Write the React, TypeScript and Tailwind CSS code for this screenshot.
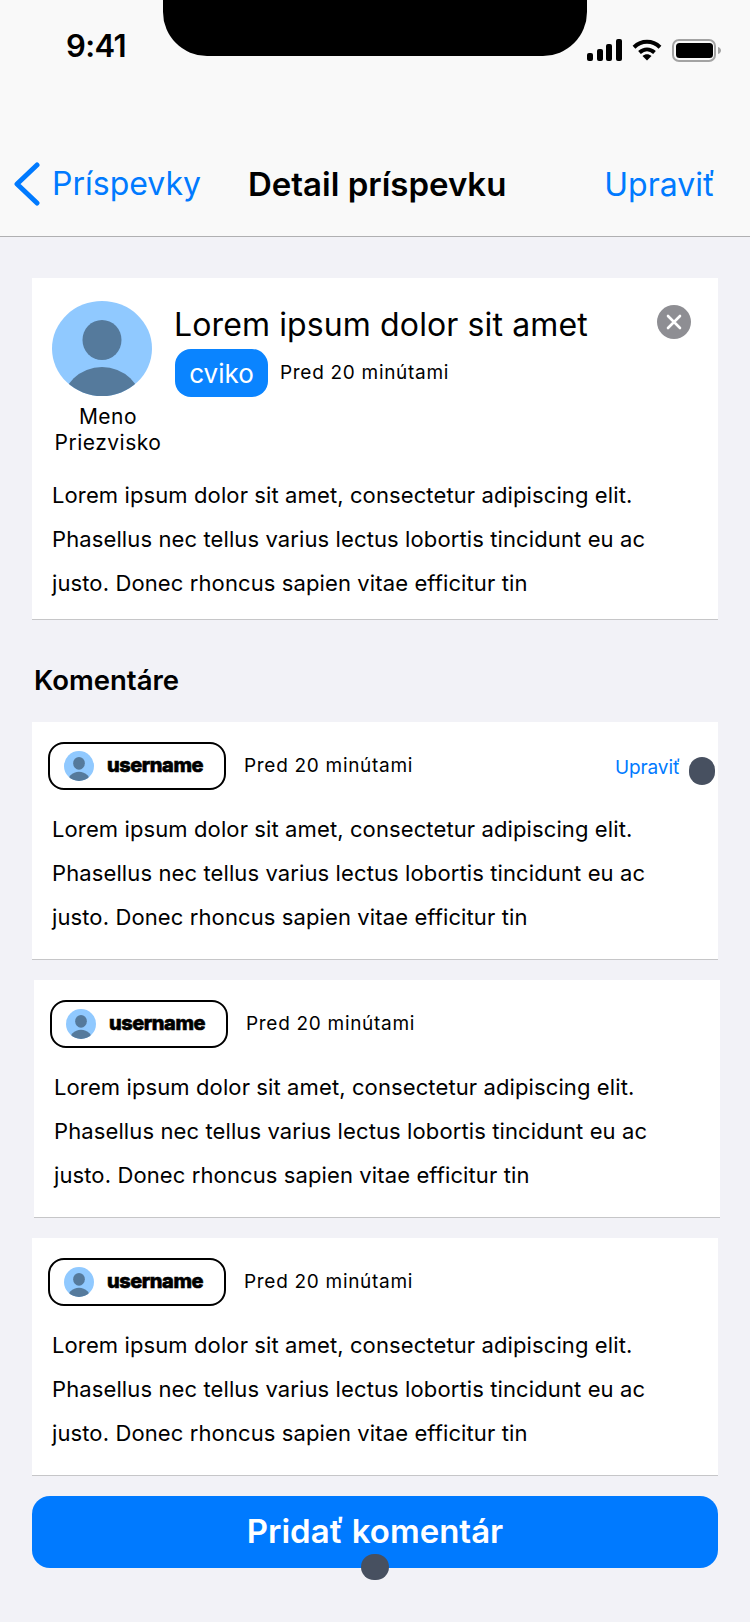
const LOREM = [
  'Lorem ipsum dolor sit amet, consectetur adipiscing elit.',
  'Phasellus nec tellus varius lectus lobortis tincidunt eu ac',
  'justo. Donec rhoncus sapien vitae efficitur tin',
];

function Avatar({ className }: { className: string }) {
  return (
    <svg viewBox="0 0 100 95" preserveAspectRatio="none" className={className}>
      <defs>
        <clipPath id="avatar-clip">
          <ellipse cx="50" cy="47.5" rx="50" ry="47.5" />
        </clipPath>
      </defs>
      <ellipse cx="50" cy="47.5" rx="50" ry="47.5" fill="#90c9ff" />
      <g clipPath="url(#avatar-clip)" fill="#557a9c">
        <ellipse cx="50" cy="39" rx="19.5" ry="20" />
        <ellipse cx="50" cy="104" rx="40" ry="38" />
      </g>
    </svg>
  );
}

function StatusIcons() {
  return (
    <div className="flex items-center gap-[10px] pt-[34px]">
      <svg width="35" height="22" viewBox="0 0 35 22" fill="#000">
        <rect x="0" y="14" width="6" height="8" rx="2" />
        <rect x="10" y="10" width="6" height="12" rx="2" />
        <rect x="19" y="5" width="6" height="17" rx="2" />
        <rect x="29" y="0" width="6" height="22" rx="2" />
      </svg>
      <svg width="30" height="22" viewBox="0 0 30 22" fill="none" stroke="#000" strokeWidth="4">
        <path d="M2 8.2C9.5 1 20.5 1 28 8.2" />
        <path d="M7.5 13.4C12 9.4 18 9.4 22.5 13.4" />
        <path d="M10.5 17 15 21.6 19.5 17C16.8 14.8 13.2 14.8 10.5 17Z" fill="#000" stroke="none" />
      </svg>
      <svg width="49" height="23" viewBox="0 0 49 23" fill="none">
        <rect x="1" y="1" width="42" height="21" rx="6" stroke="#a3a3a3" strokeWidth="2" />
        <rect x="4" y="4" width="37" height="15" rx="3.5" fill="#000" />
        <path d="M46 8C48 8.6 49 10 49 11.5S48 14.4 46 15Z" fill="#a3a3a3" />
      </svg>
    </div>
  );
}

function Header() {
  return (
    <header className="h-[237px] shrink-0 border-b border-[#b0b0b2] bg-[#f9f9f9]">
      <div className="grid h-[56px] grid-cols-[163px_424px_163px]">
        <span className="pl-[66px] pt-[26px] text-[31px] leading-[40px] font-semibold tracking-[-0.6px] text-black">9:41</span>
        <div className="h-[56px] rounded-b-[44px] bg-black" />
        <StatusIcons />
      </div>
      <nav className="mt-[106px] flex h-[44px] items-center">
        <svg width="28" height="44" viewBox="0 0 28 44" fill="none" stroke="#007aff" strokeWidth="5" strokeLinecap="round" strokeLinejoin="round" className="ml-[13px] shrink-0">
          <path d="M24 3 4 22l20 19" />
        </svg>
        <span className="ml-[11px] text-[32px] leading-[44px] text-[#007aff]">Príspevky</span>
        <span className="ml-[47px] text-[33px] leading-[44px] font-semibold text-black">Detail príspevku</span>
        <span className="ml-auto mr-[35px] mt-[2px] text-[32px] leading-[44px] text-[#007aff]">Upraviť</span>
      </nav>
    </header>
  );
}

function Body() {
  return (
    <div className="mt-[17px] text-[22px] leading-[44px] tracking-[0.11px] text-black">
      {LOREM.map((line) => (
        <p key={line} className="whitespace-nowrap">{line}</p>
      ))}
    </div>
  );
}

function PostCard() {
  return (
    <section className="h-[342px] border-b border-[#c6c6c8] bg-white pl-[20px] pr-[27px] pt-[23px]">
      <div className="flex h-[155px]">
        <div className="flex w-[112px] shrink-0 flex-col items-center">
          <Avatar className="mr-[12px] h-[95px] w-[100px] shrink-0" />
          <p className="mt-[8px] text-center text-[21px] leading-[26px] tracking-[0.5px] text-black">Meno Priezvisko</p>
        </div>
        <div className="ml-[10px] flex-1">
          <div className="flex items-start justify-between">
            <h1 className="mt-[2px] text-[32px] leading-[44px] tracking-[0.12px] whitespace-nowrap text-black">Lorem ipsum dolor sit amet</h1>
            <div className="mt-[4px] flex h-[34px] w-[34px] items-center justify-center rounded-full bg-[#8e8e93]">
              <svg width="16" height="16" viewBox="0 0 16 16" stroke="#fff" strokeWidth="2.6" strokeLinecap="round">
                <path d="M2 2l12 12M14 2 2 14" />
              </svg>
            </div>
          </div>
          <div className="mt-[2px] flex items-center gap-[12px]">
            <span className="ml-[1px] flex h-[48px] w-[93px] items-center justify-center rounded-[16px] bg-[#0a84ff] text-[26px] text-white">cviko</span>
            <span className="pt-[1px] text-[19px] tracking-[0.7px] text-black">Pred 20 minútami</span>
          </div>
        </div>
      </div>
      <Body />
    </section>
  );
}

function CommentCard({ edit, shifted }: { edit?: boolean; shifted?: boolean }) {
  return (
    <section className={shifted ? '-mr-[2px] ml-[2px] h-[238px] border-b border-[#c6c6c8] bg-white pl-[20px] pt-[20px]' : 'h-[238px] border-b border-[#c6c6c8] bg-white pl-[20px] pt-[20px]'}>
      <div className="-ml-[4px] flex h-[48px] items-center">
        <div className="flex h-[48px] w-[178px] shrink-0 items-center rounded-[16px] border-2 border-black pl-[14px]">
          <Avatar className="h-[30px] w-[30px]" />
          <span className="mb-[2px] ml-[13px] text-[20px] leading-none font-extrabold tracking-[-0.45px] text-black [-webkit-text-stroke:0.6px_#000]">username</span>
        </div>
        <span className="mt-[1px] ml-[18px] text-[19px] tracking-[0.7px] text-black">Pred 20 minútami</span>
        {edit && (
          <div className="ml-auto mr-[3px] mt-[10px] flex items-center gap-[9px]">
            <span className="-mt-[6px] text-[19px] leading-[24px] tracking-[-0.1px] text-[#007aff]">Upraviť</span>
            <div className="h-[28px] w-[26px] rounded-full bg-[#475060]" />
          </div>
        )}
      </div>
      <Body />
    </section>
  );
}

export default function App() {
  return (
    <div className="flex h-[1622px] w-[750px] flex-col overflow-hidden bg-[#f2f2f7] font-['Inter',sans-serif]">
      <Header />
      <main className="flex flex-col px-[32px] pt-[41px]">
        <PostCard />
        <h2 className="ml-[2px] mt-[43px] text-[27.5px] leading-[34px] font-semibold text-black">Komentáre</h2>
        <div className="mt-[25px] flex flex-col gap-[20px]">
          <CommentCard edit />
          <CommentCard shifted />
          <CommentCard />
        </div>
        <button className="relative mt-[20px] h-[72px] w-full rounded-[18px] bg-[#007aff] text-[33px] font-semibold text-white">
          Pridať komentár
          <span className="absolute left-[329px] top-[58px] h-[26px] w-[28px] rounded-full bg-[#475060]" />
        </button>
      </main>
    </div>
  );
}
